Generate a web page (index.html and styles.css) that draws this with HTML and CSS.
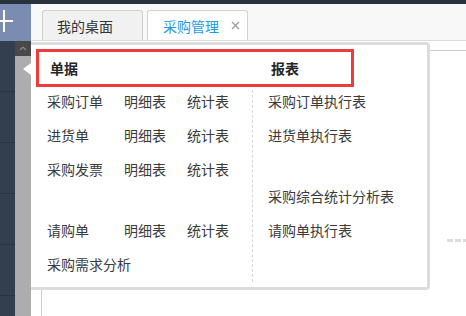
FILE: index.html
```html
<!DOCTYPE html>
<html lang="zh-CN">
<head>
    <meta charset="UTF-8">
    <meta name="viewport" content="width=device-width, initial-scale=1.0">
    <title>采购管理</title>
    <link rel="stylesheet" href="styles.css">
</head>
<body>
    <div class="topbar"></div>
    <div class="layout">
        <aside class="sidebar">
            <div class="logo">
                <svg width="31" height="37" viewBox="0 0 31 37">
                    <path d="M-9 17H13M4 6V28" stroke="#fff" stroke-width="2" fill="none"/>
                </svg>
            </div>
            <div class="side-body">
                <ul class="nav">
                    <li></li>
                    <li></li>
                    <li></li>
                    <li></li>
                    <li></li>
                </ul>
                <div class="strip">
                    <div class="strip-up">
                        <svg width="16" height="14" viewBox="0 0 16 14">
                            <path d="M5 9L8 6L11 9" stroke="#8a8a8a" stroke-width="1.2" fill="none"/>
                        </svg>
                    </div>
                </div>
            </div>
        </aside>
        <main class="main">
            <div class="tabs">
                <div class="tab">我的桌面</div>
                <div class="tab active">
                    采购管理
                    <span class="close">
                        <svg width="9" height="9" viewBox="0 0 9 9">
                            <path d="M1 1L8 8M8 1L1 8" stroke="#9a9a9a" stroke-width="1.2" fill="none"/>
                        </svg>
                    </span>
                </div>
            </div>
            <div class="content">
                <div class="frame">
                    <div class="loading"></div>
                </div>
            </div>
        </main>
    </div>

    <div class="menu">
        <div class="menu-head">
            <span class="head-left">单据</span>
            <span>报表</span>
        </div>
        <div class="menu-body">
            <div class="col-left">
                <div class="row"><span class="c1">采购订单</span><span class="c2">明细表</span><span>统计表</span></div>
                <div class="row"><span class="c1">进货单</span><span class="c2">明细表</span><span>统计表</span></div>
                <div class="row"><span class="c1">采购发票</span><span class="c2">明细表</span><span>统计表</span></div>
                <div class="row spaced"><span class="c1">请购单</span><span class="c2">明细表</span><span>统计表</span></div>
                <div class="row"><span class="c1">采购需求分析</span></div>
            </div>
            <div class="col-right">
                <div class="row">采购订单执行表</div>
                <div class="row">进货单执行表</div>
                <div class="row spaced">采购综合统计分析表</div>
                <div class="row">请购单执行表</div>
            </div>
        </div>
    </div>
</body>
</html>
```

FILE: styles.css
```css
* {
    box-sizing: border-box;
}
body {
    margin: 0;
    height: 100vh;
    overflow: hidden;
    background-color: #fff;
    font-family: "Noto Sans CJK SC", "Liberation Sans", sans-serif;
    font-size: 14px;
    color: #3a3a3a;
}
.topbar {
    height: 4px;
    background-color: #28323f;
}
.layout {
    display: flex;
    height: calc(100vh - 4px);
}
.sidebar {
    width: 31px;
    display: flex;
    flex-direction: column;
}
.logo {
    height: 37px;
    background-color: #7a8cb1;
}
.logo svg {
    display: block;
}
.side-body {
    flex: 1;
    display: flex;
}
.nav {
    width: 15px;
    margin: 0;
    padding: 0;
    list-style: none;
    background-color: #333e4e;
}
.nav li {
    height: 51px;
    border-bottom: 1px solid #2a3441;
}
.strip {
    width: 16px;
    background-color: #adadad;
}
.strip-up {
    height: 15px;
    background-color: #484848;
}
.strip-up svg {
    display: block;
}
.main {
    flex: 1;
    display: flex;
    flex-direction: column;
}
.tabs {
    height: 37px;
    display: flex;
    align-items: flex-end;
    gap: 4px;
    padding-left: 11px;
    background-color: #f8f8f8;
    border-bottom: 1px solid #dcdcdc;
}
.tab {
    width: 101px;
    height: 30px;
    padding-left: 14px;
    display: flex;
    align-items: center;
    border: 1px solid #d0d0d0;
    border-bottom: none;
    border-radius: 3px 3px 0 0;
    background-color: #f1f1f1;
    color: #333;
    line-height: 20px;
}
.tab.active {
    padding-left: 15px;
    background-color: #fff;
    color: #1c9be0;
}
.close {
    margin-left: 12px;
    display: flex;
}
.content {
    flex: 1;
    padding: 9px 0 0 10px;
}
.frame {
    height: 100%;
    border-top: 1px solid #cfcfcf;
    border-left: 1px solid #cfcfcf;
    display: flex;
    flex-direction: column;
}
.loading {
    margin-top: 188px;
    margin-left: auto;
    width: 19px;
    height: 3px;
    background: repeating-linear-gradient(90deg, #dcdcdc 0 6px, transparent 6px 8px);
}
.menu {
    position: absolute;
    left: 31px;
    top: 42px;
    width: 399px;
    height: 248px;
    background-color: #fff;
    border: 3px solid #dcdcdc;
    border-left: none;
    border-radius: 0 4px 4px 0;
}
.menu::before {
    content: "";
    position: absolute;
    left: -8px;
    top: 18px;
    border-top: 6px solid transparent;
    border-bottom: 6px solid transparent;
    border-right: 8px solid #fff;
}
.menu-head {
    margin: 4px 0 0 5px;
    width: 318px;
    height: 38px;
    padding-left: 11px;
    display: flex;
    align-items: center;
    border: 3px solid #ee3b3b;
    font-weight: bold;
    color: #262626;
}
.head-left {
    width: 221px;
}
.menu-body {
    display: flex;
    margin-top: 3px;
    height: 192px;
}
.col-left {
    width: 221px;
    padding: 1px 0 0 16px;
}
.col-right {
    padding: 1px 0 0 15px;
    border-left: 1px dashed #d6d6d6;
}
.row {
    display: flex;
    height: 20px;
    line-height: 20px;
    white-space: nowrap;
}
.row + .row {
    margin-top: 14px;
}
.row.spaced {
    margin-top: 41px;
}
.c1 {
    width: 77px;
}
.c2 {
    width: 63px;
}
```
